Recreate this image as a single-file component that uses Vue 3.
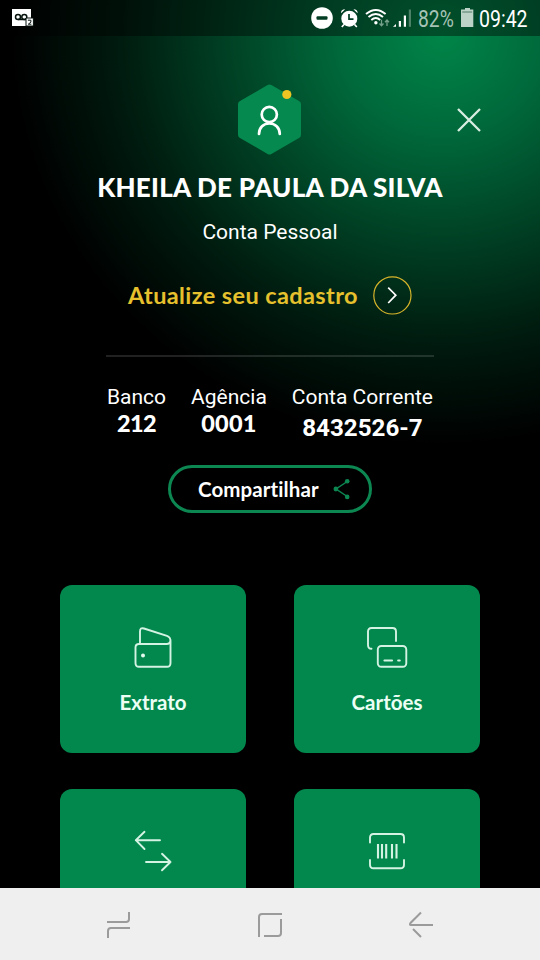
<script setup>
const accounts = [
  { label: 'Banco', value: '212', kind: 'bank' },
  { label: 'Agência', value: '0001', kind: 'branch' },
  { label: 'Conta Corrente', value: '8432526-7', kind: 'number' },
]
const tiles = [
  { icon: 'wallet', label: 'Extrato' },
  { icon: 'cards', label: 'Cartões' },
  { icon: 'transfer', label: '' },
  { icon: 'barcode', label: '' },
]
</script>

<template>
  <div class="screen">
    <header class="status">
      <svg class="voicemail" width="22" height="18" viewBox="0 0 22 18">
        <path d="M0 0H19V9H21V17H0Z" fill="#fff" />
        <g fill="none" stroke="#07130d" stroke-width="1.5">
          <circle cx="6" cy="8" r="2.5" /><circle cx="12.3" cy="8" r="2.5" />
          <path d="M6 10.5H14" />
        </g>
        <path d="M14 9H21.4V17H14Z" fill="#fff" stroke="#07130d" stroke-width="1" />
        <path d="M15.9 11.2H18.9V13.2L16.3 15.2H19.4" fill="none" stroke="#07130d" stroke-width="1" />
      </svg>
      <svg class="indicators" width="104" height="24" viewBox="310 6 104 24">
        <circle cx="322" cy="18" r="10.8" fill="#fff" />
        <rect x="316.5" y="16.3" width="11" height="3.4" rx="1" fill="#013c23" />
        <g fill="#fff">
          <circle cx="349.3" cy="18.7" r="8" />
          <path d="M341 13.3Q340.8 9.3 345.2 9.2ZM357.6 13.3Q357.8 9.3 353.4 9.2Z" />
        </g>
        <path d="M344 24.5L341.8 27M354.6 24.5L356.8 27" stroke="#fff" stroke-width="1.7" />
        <path d="M349 14V19.2H353.5" fill="none" stroke="#013c23" stroke-width="1.7" />
        <g fill="none" stroke="#fff" stroke-width="1.9">
          <path d="M366 14Q375.8 5.8 385.6 14" /><path d="M368.5 17Q375.8 10.8 383 17" />
          <path d="M371.3 20Q375.8 16.2 380.2 20" />
        </g>
        <circle cx="375.9" cy="22.7" r="1.7" fill="#fff" />
        <path d="M381.5 19.7V25.5M379.5 23.5L381.5 25.7L383.5 23.5M387 26V20.2M385 22.2L387 20L389 22.2" fill="none" stroke="#75a18b" stroke-width="1.3" />
        <path d="M393 26.8L396 24V26.8ZM398.8 21H401V26.8H398.8ZM403.8 15.5H406V26.8H403.8Z" fill="#fff" />
        <path d="M408.8 9.5H411V26.8H408.8Z" fill="#4c8067" />
      </svg>
      <span class="battery-value">82%</span>
      <svg class="battery" width="13" height="20" viewBox="0 0 13 20">
        <path d="M4 0H9V1.6H12.3V19H0V1.6H4Z" fill="#bdd3c8" /><path d="M1.2 4H11.2" stroke="#507c66" />
      </svg>
      <time>09:42</time>
    </header>

    <main>
      <div class="avatar-row">
        <svg class="avatar" width="64" height="71" viewBox="0 0 64 71">
          <path d="M29.6 1.1Q31.5 0 33.4 1.1L61 17Q63 18.1 63 20.3V50.7Q63 52.9 61 54L33.4 69.9Q31.5 71 29.6 69.9L2 54Q0 52.9 0 50.7V20.3Q0 18.1 2 17Z" fill="#05894f" />
          <g fill="none" stroke="#fff" stroke-width="2.7" stroke-linecap="round">
            <circle cx="31.3" cy="30.5" r="7.6" />
            <path d="M21 50C21 43.5 25.7 39.5 31.3 39.5S41.8 43.5 41.8 50" />
          </g>
          <circle cx="48.8" cy="10.5" r="4.6" fill="#eec423" />
        </svg>
        <svg class="close" width="26" height="26" viewBox="0 0 26 26">
          <path d="M2 2L24 24M24 2L2 24" stroke="#d9eee3" stroke-width="2.3" />
        </svg>
      </div>

      <h1><span>KHEILA DE PAULA DA SILVA</span></h1>
      <p class="kind">Conta Pessoal</p>

      <div class="update">
        <span>Atualize seu cadastro</span>
        <svg width="40" height="40" viewBox="0 0 40 40" fill="none">
          <circle cx="20.4" cy="20.4" r="18.6" stroke="#d8b52a" stroke-width="1.2" />
          <path d="M16.2 12.6L23.8 20.2L16.2 28" stroke="#fff" stroke-width="1.7" />
        </svg>
      </div>

      <hr />
      <dl>
        <div v-for="a in accounts" :key="a.label" :class="a.kind">
          <dt>{{ a.label }}</dt>
          <dd>{{ a.value }}</dd>
        </div>
      </dl>

      <button class="share">
        <span>Compartilhar</span>
        <svg width="18" height="22" viewBox="0 0 18 22">
          <path d="M15 3L3 11L15 19" fill="none" stroke="#0d8752" stroke-width="1.5" />
          <g fill="#0d8752"><circle cx="14.2" cy="3.2" r="2.3" /><circle cx="2.9" cy="11" r="2.4" /><circle cx="14.2" cy="18.9" r="2.3" /></g>
        </svg>
      </button>

      <section class="tiles">
        <article v-for="t in tiles" :key="t.icon">
          <svg width="46" height="46" viewBox="-1 -1 46 46" fill="none" stroke="#d4f3e3" stroke-width="1.9" stroke-linecap="round" stroke-linejoin="round">
            <template v-if="t.icon === 'wallet'">
              <path d="M9 19V6.5Q9 2.2 13 3.5L36 10.8Q39.5 12 39.5 16V38Q39.5 41.8 36 41.8H8Q4.5 41.8 4.5 38V22.5Q4.5 19 8 19H35.5Q39.5 19 39.5 15" />
              <circle cx="12" cy="30.5" r="2" fill="#e3faee" stroke="none" />
            </template>
            <template v-else-if="t.icon === 'cards'">
              <path d="M6.5 23.8Q3 23.8 3 20V6.5Q3 3 6.5 3H27.5Q31 3 31 6.5V16" />
              <rect x="12.8" y="21" width="28.5" height="20.8" rx="3.5" />
              <path d="M19.5 35.5H27M33.2 35.5H34.7" stroke-width="2.2" />
            </template>
            <template v-else-if="t.icon === 'transfer'">
              <path d="M29 11.2H4.8M13.5 2.8L4.8 11.2L13.5 20M15 33H39.5M31 24.8L39.5 33L31 41.3" />
            </template>
            <template v-else>
              <path d="M5 13.5V8.5Q5 5 8.5 5H35.5Q39 5 39 8.5V13.5M5 31V35.7Q5 39.2 8.5 39.2H35.5Q39 39.2 39 35.7V31" />
              <path d="M13 15V29.5M17 15V29.5M21.2 15V29.5M27 15V29.5M31.5 15V29.5" stroke-width="2.1" stroke-linecap="butt" />
            </template>
          </svg>
          <h2 v-if="t.label">{{ t.label }}</h2>
        </article>
      </section>
    </main>

    <nav>
      <svg width="26" height="28" viewBox="-1 0 26 28"><path d="M0 12H19Q22 12 22 9V2M23 18H4Q1 18 1 21V28" /></svg>
      <svg width="26" height="28" viewBox="0 -0.5 26 28"><path d="M25 3.5H5Q2 3.5 2 6.5V26.5M24 8.5V22.5Q24 25.5 21 25.5H7" /></svg>
      <svg width="26" height="28" viewBox="0 -0.5 26 28"><path d="M13 2L2.5 12.5Q1.2 14.5 3 14.5H25M5 18.5L13 26.5" /></svg>
    </nav>
  </div>
</template>

<style>
body { margin: 0; background: #000; }
</style>

<style scoped>
.screen {
  width: 540px; height: 960px; overflow: hidden; display: flex; flex-direction: column;
  color: #fff; font-family: Lato, sans-serif;
  background: radial-gradient(ellipse 430px 410px at 442px 34px, #008548 0, #00693b 24%, #003f23 51%, #001b0f 75%, #000 100%);
}
.status {
  flex: none; height: 36px; box-sizing: border-box; padding: 0 12px; display: flex; align-items: center;
  background: rgba(0, 0, 0, .4); font-family: Roboto, sans-serif; white-space: nowrap;
}
.indicators { margin-left: 276px; flex: none; }
.voicemail, .battery { flex: none; }
.battery-value, time { flex: none; font-size: 23.5px; line-height: 36px; transform-origin: left; padding-top: 2px; }
.battery-value { width: 37px; margin-left: 4px; margin-right: 6px; color: #a7c3b5; transform: scaleX(.82); }
time { margin-left: 5px; transform: scaleX(.83); width: 50px; }
main { flex: 1; min-height: 0; overflow: hidden; }
.avatar-row { display: grid; grid-template-columns: 1fr 64px 1fr; align-items: center; padding-top: 48px; }
.avatar { grid-column: 2; }
.close { justify-self: end; margin-right: 58px; }
h1, p, h2, dl, dd { margin: 0; }
h1 { display: flex; justify-content: center; white-space: nowrap; font-size: 26px; font-weight: 900; line-height: 34px; margin-top: 15px; letter-spacing: .26px; }
.kind { text-align: center; font: 21px/30px Roboto, sans-serif; margin-top: 13px; }
.update { height: 40px; margin-top: 28px; padding: 0 128px; display: flex; align-items: center; justify-content: space-between; color: #e6c02d; font-size: 23.5px; letter-spacing: .4px; font-weight: 700; white-space: nowrap; }
.update svg { flex: none; }
hr { width: 328px; height: 2px; margin: 40px auto 0; border: 0; background: rgba(255, 255, 255, .13); }
dl { display: flex; justify-content: space-between; width: 326px; margin: 26px auto 0; height: 61px; text-align: center; white-space: nowrap; }
dt { font: 21px/28px Roboto, sans-serif; }
dd { font-size: 23.5px; font-weight: 900; line-height: 28px; margin-top: -2px; }
.bank dd { letter-spacing: -.6px; }
.branch dd { letter-spacing: .2px; }
.number dd { font: 700 24.2px/28px Roboto, sans-serif; margin-top: 3px; }
.share {
  box-sizing: border-box; width: 204px; height: 48px; margin: 21px auto 0; padding: 0 18px 0 27px; display: flex; align-items: center; justify-content: space-between;
  border: 3px solid #0d8752; border-radius: 24px; background: transparent; color: #fff; font: 700 20.5px Lato, sans-serif; letter-spacing: .1px;
}
.tiles { display: grid; grid-template-columns: 186px 186px; gap: 36px 48px; justify-content: center; padding-top: 72px; }
article { box-sizing: border-box; height: 168px; padding-top: 39px; border-radius: 12px; background: #02874d; display: flex; flex-direction: column; align-items: center; }
h2 { font-size: 20.5px; line-height: 28px; font-weight: 700; margin-top: 18px; color: #ecfff5; }
nav { flex: none; height: 72px; background: #efefef; display: flex; justify-content: center; align-items: center; gap: 125px; }
nav svg { fill: none; stroke: #9b9b9b; stroke-width: 2; }
</style>
